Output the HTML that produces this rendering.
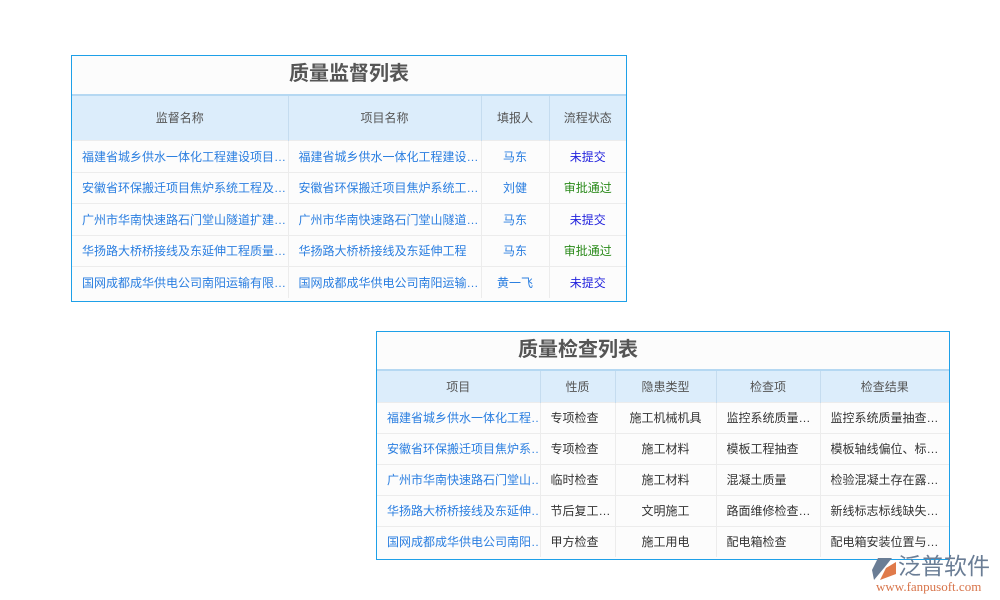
<!DOCTYPE html>
<html><head><meta charset="utf-8"><style>
body{margin:0;width:1000px;height:600px;background:#fff;position:relative;overflow:hidden;font-family:"Liberation Sans","Noto Sans CJK SC",sans-serif;}
.t{position:absolute;border:1px solid #1ea0e8;background:#fcfcfc;box-sizing:border-box}
.ti{text-align:center;font-weight:bold;color:#555;border-bottom:2px solid #b5d8f2;box-sizing:border-box}
table{border-collapse:collapse;width:100%;table-layout:fixed}
th{background:#dcedfb;color:#555;font-weight:normal;border-right:1px solid #c5dcef;font-size:12px}
td{border-top:1px solid #ececec;border-right:1px solid #ececec;font-size:12px;white-space:nowrap;overflow:hidden;padding:0 10px;color:#333}
tr td:last-child,tr th:last-child{border-right:none}
.b{color:#2a7ee0}.c{text-align:center}.p{color:#2222dd}.g{color:#2a8a1a}
</style></head><body>
<div class="t" style="left:71px;top:55px;width:556px;height:247px">
<div class="ti" style="height:40px;line-height:36px;font-size:20px">质量监督列表</div>
<table><colgroup><col style="width:216px"><col style="width:193px"><col style="width:68px"><col></colgroup>
<tr style="height:44px"><th>监督名称</th><th>项目名称</th><th>填报人</th><th>流程状态</th></tr>
<tr style="height:32px"><td class="b">福建省城乡供水一体化工程建设项目…</td><td class="b">福建省城乡供水一体化工程建设…</td><td class="b c">马东</td><td class="c p">未提交</td></tr>
<tr style="height:31px"><td class="b">安徽省环保搬迁项目焦炉系统工程及…</td><td class="b">安徽省环保搬迁项目焦炉系统工…</td><td class="b c">刘健</td><td class="c g">审批通过</td></tr>
<tr style="height:32px"><td class="b">广州市华南快速路石门堂山隧道扩建…</td><td class="b">广州市华南快速路石门堂山隧道…</td><td class="b c">马东</td><td class="c p">未提交</td></tr>
<tr style="height:31px"><td class="b">华扬路大桥桥接线及东延伸工程质量…</td><td class="b">华扬路大桥桥接线及东延伸工程</td><td class="b c">马东</td><td class="c g">审批通过</td></tr>
<tr style="height:32px"><td class="b">国网成都成华供电公司南阳运输有限…</td><td class="b">国网成都成华供电公司南阳运输…</td><td class="b c">黄一飞</td><td class="c p">未提交</td></tr>
</table></div>
<div class="t" style="left:376px;top:331px;width:574px;height:229px">
<div class="ti" style="height:39px;line-height:36px;font-size:20px;padding-right:170px">质量检查列表</div>
<table><colgroup><col style="width:163px"><col style="width:75px"><col style="width:101px"><col style="width:104px"><col></colgroup>
<tr style="height:31px"><th>项目</th><th>性质</th><th>隐患类型</th><th>检查项</th><th>检查结果</th></tr>
<tr style="height:31px"><td class="b">福建省城乡供水一体化工程…</td><td>专项检查</td><td class="c">施工机械机具</td><td>监控系统质量…</td><td>监控系统质量抽查…</td></tr>
<tr style="height:31px"><td class="b">安徽省环保搬迁项目焦炉系…</td><td>专项检查</td><td class="c">施工材料</td><td>模板工程抽查</td><td>模板轴线偏位、标…</td></tr>
<tr style="height:31px"><td class="b">广州市华南快速路石门堂山…</td><td>临时检查</td><td class="c">施工材料</td><td>混凝土质量</td><td>检验混凝土存在露…</td></tr>
<tr style="height:31px"><td class="b">华扬路大桥桥接线及东延伸…</td><td>节后复工…</td><td class="c">文明施工</td><td>路面维修检查…</td><td>新线标志标线缺失…</td></tr>
<tr style="height:31px"><td class="b">国网成都成华供电公司南阳…</td><td>甲方检查</td><td class="c">施工用电</td><td>配电箱检查</td><td>配电箱安装位置与…</td></tr>
</table></div>
<svg style="position:absolute;left:872px;top:556px" width="26" height="26" viewBox="0 0 26 26"><path d="M6 2 L20 2 L12 12 L2 24 L0 14 Z" fill="#6a7d95"/><path d="M14 12 L24 6 L24 18 L8 24 Z" fill="#e07a4a"/></svg>
<div style="position:absolute;left:898px;top:553px;font-size:23px;line-height:26px;color:#6a7d95;white-space:nowrap">泛普软件</div>
<div style="position:absolute;left:876px;top:579px;font-size:13px;color:#d8744a;font-family:'Liberation Serif',serif;white-space:nowrap">www.fanpusoft.com</div>
</body></html>
